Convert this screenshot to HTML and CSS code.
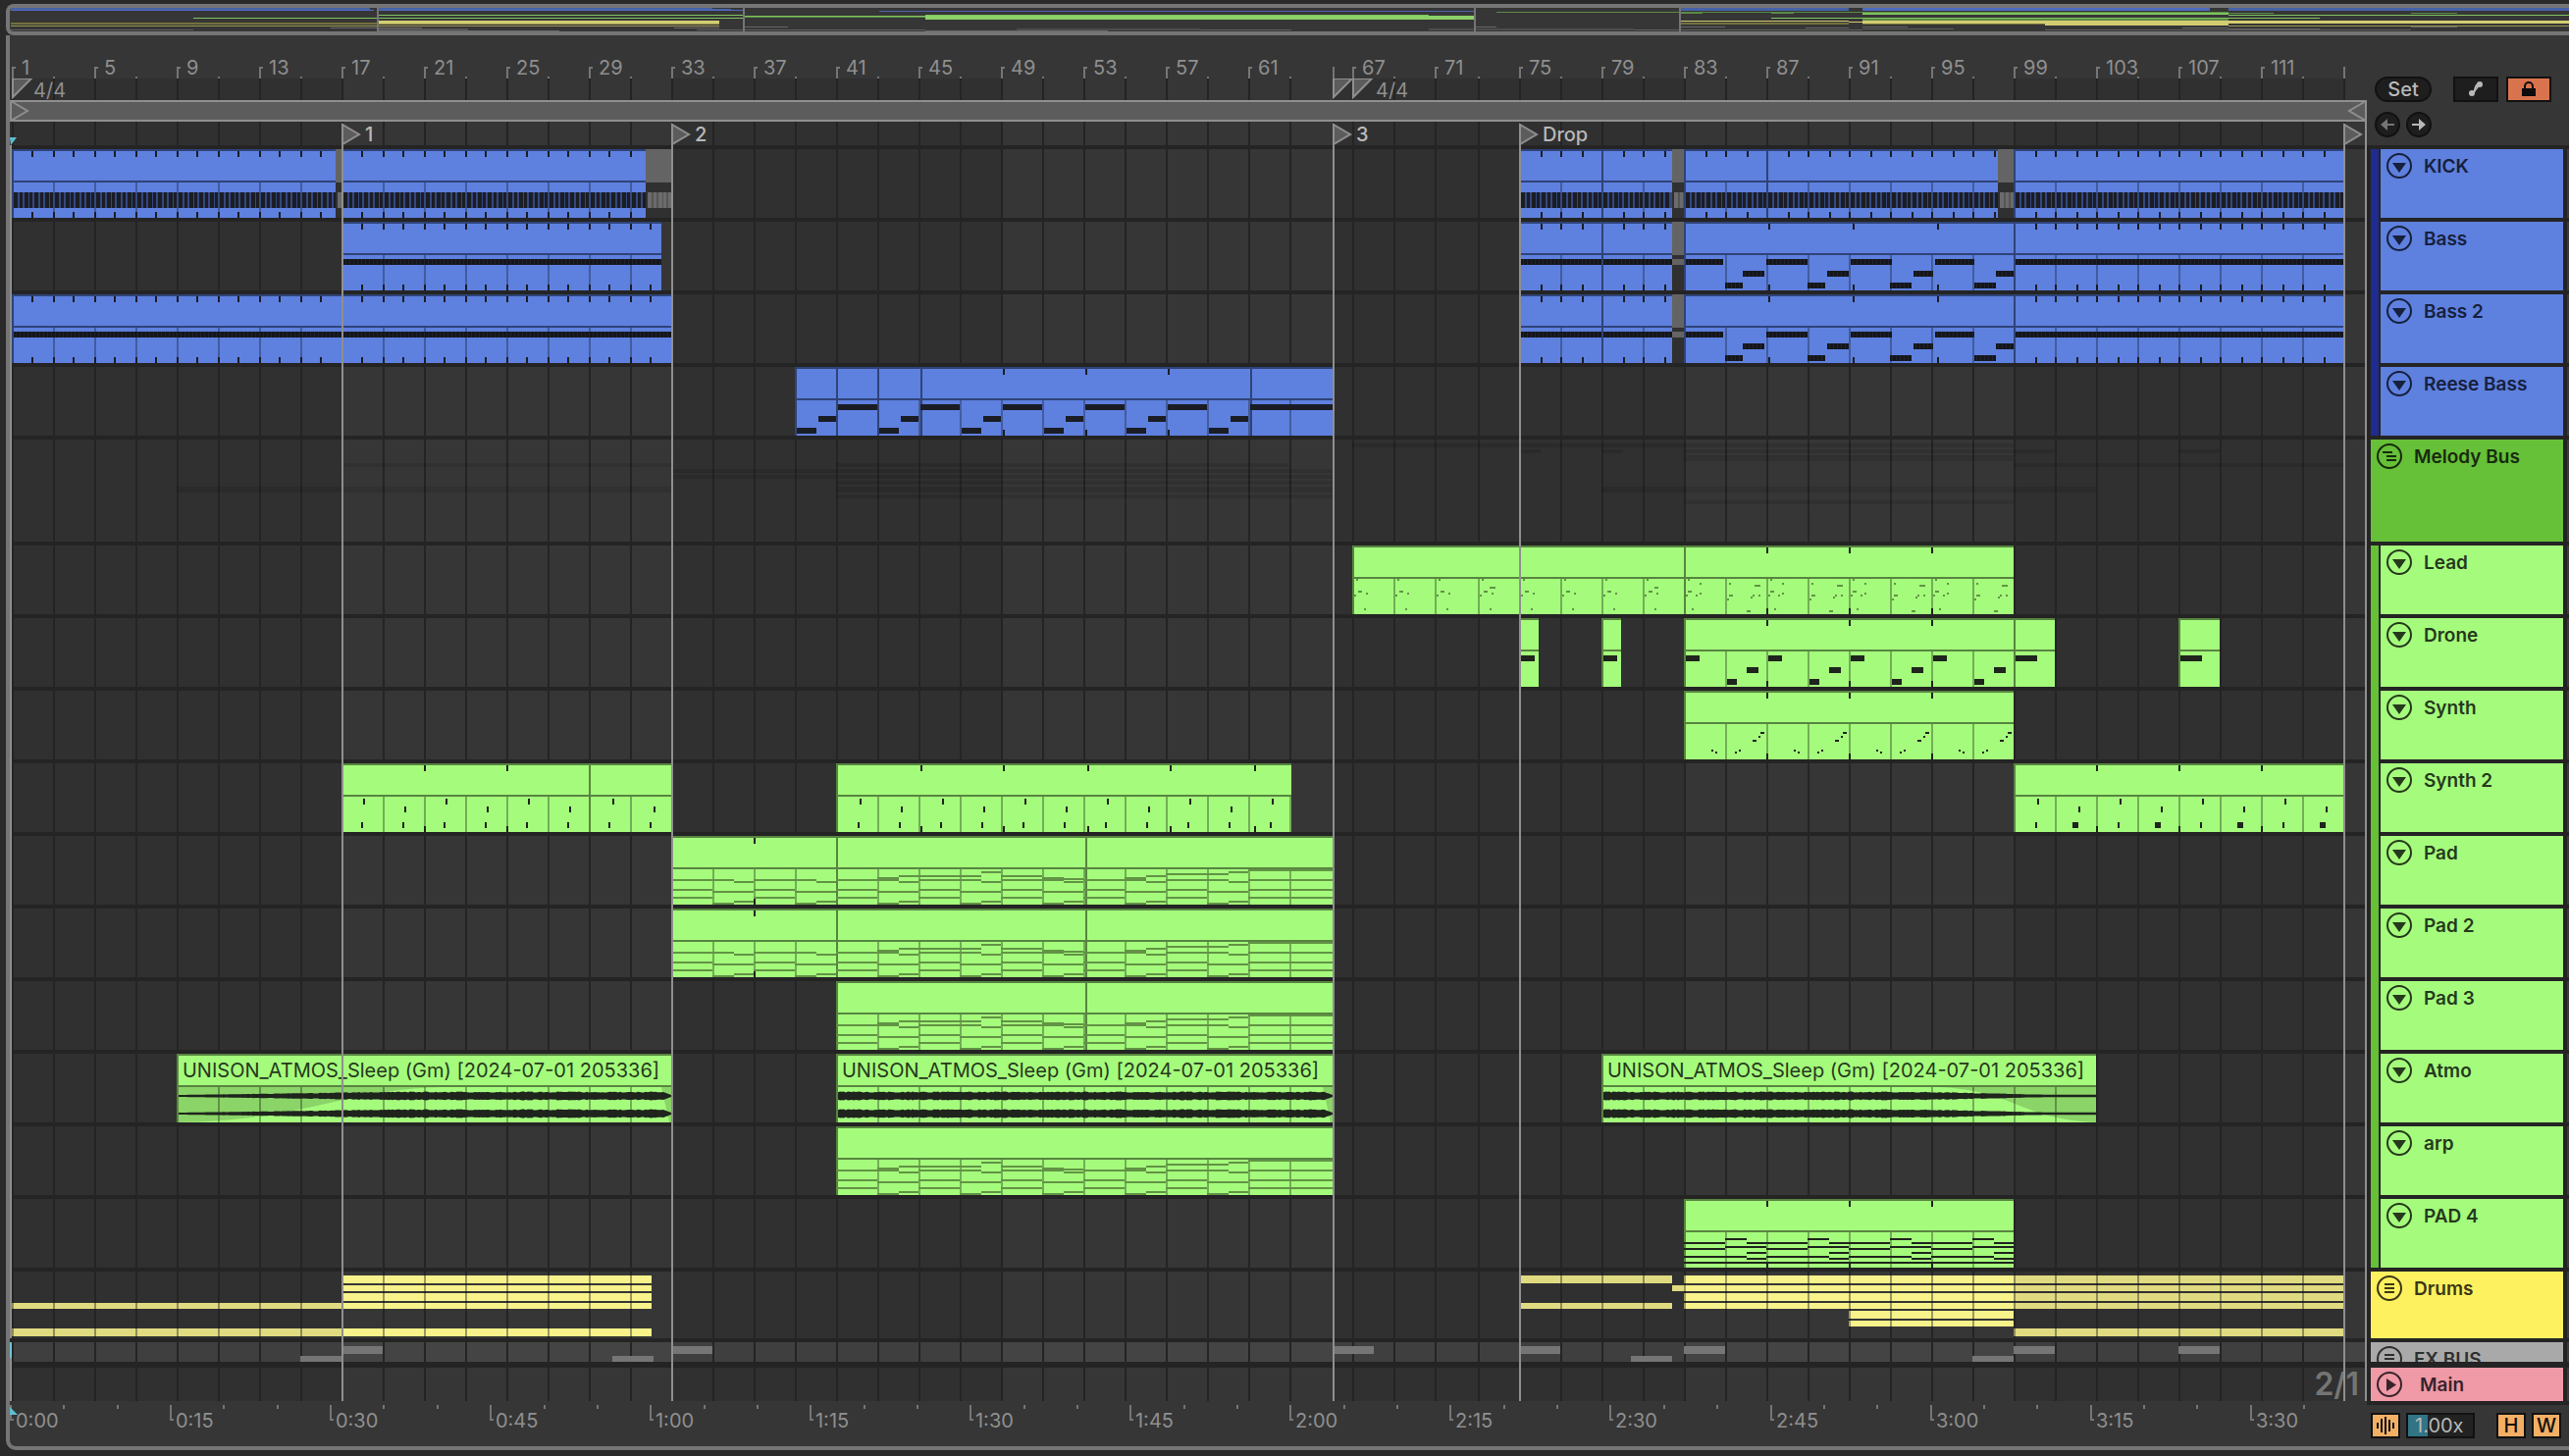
FILE: index.html
```
<!DOCTYPE html>
<html lang="en">
<head>
    <meta charset="UTF-8">
    <meta name="viewport" content="width=device-width, initial-scale=1.0">
    <title>Arrangement</title>
    <link rel="stylesheet" href="styles.css">
</head>
<body>
    <svg class="symbols" aria-hidden="true">
        <symbol id="fold" viewBox="0 0 26 26">
            <circle cx="13" cy="13" r="12" fill="none" stroke="currentColor" stroke-width="2"/>
            <path d="M6 10h14l-7 10z" fill="currentColor"/>
        </symbol>
        <symbol id="group" viewBox="0 0 26 26">
            <circle cx="13" cy="13" r="12" fill="none" stroke="currentColor" stroke-width="2"/>
            <path d="M8 9h10M8 13h10M8 17h10" stroke="currentColor" stroke-width="2"/>
        </symbol>
        <symbol id="bus" viewBox="0 0 26 26">
            <circle cx="13" cy="13" r="12" fill="none" stroke="currentColor" stroke-width="2"/>
            <path d="M6 9h10M10 13h10M10 17h10" stroke="currentColor" stroke-width="2"/>
        </symbol>
        <symbol id="play" viewBox="0 0 26 26">
            <circle cx="13" cy="13" r="12" fill="none" stroke="currentColor" stroke-width="2"/>
            <path d="M10 7v13l10-6.500z" fill="currentColor"/>
        </symbol>
    </svg>

    <div class="overview" id="overview"></div>

    <main class="arrangement">
        <section class="timeline">
            <div class="ruler" id="ruler"></div>
            <div class="signatures" id="signatures"></div>
            <div class="loop" id="loop"></div>
            <div class="tracks">
                <div class="locators" id="locators"></div>
                <div class="lanes" id="lanes"></div>
                <div class="lane main-lane" id="mainLane"><span class="zoom-value">2/1</span></div>
                <div class="lines" id="lines"></div>
            </div>
            <div class="time-ruler" id="timeRuler"></div>
        </section>

        <aside class="sidebar">
            <div class="controls">
                <div class="control-row">
                    <button class="pill">Set</button>
                    <button class="square automation" aria-label="Automation mode">
                        <svg width="42" height="22" viewBox="0 0 42 22"><path d="M17 16c5-1 1-10 8-11" fill="none" stroke="#b8b8b8" stroke-width="2"/><path d="M17 16 25 6" stroke="#b8b8b8" stroke-width="2"/><circle cx="17" cy="15" r="3" fill="#b8b8b8"/><circle cx="25" cy="6" r="3" fill="#b8b8b8"/></svg>
                    </button>
                    <button class="square lock" aria-label="Lock envelopes">
                        <svg width="42" height="22" viewBox="0 0 42 22"><path d="M17 11V8a4 4 0 0 1 8 0v3" fill="none" stroke="#0c0c0c" stroke-width="2"/><path d="M14 10h14v8H14z" fill="#0c0c0c"/></svg>
                    </button>
                </div>
                <div class="control-row">
                    <button class="round off" aria-label="Previous locator">
                        <svg width="22" height="22" viewBox="0 0 22 22"><path d="M4 11l7-6v5h7v2h-7v5z" fill="currentColor"/></svg>
                    </button>
                    <button class="round" aria-label="Next locator">
                        <svg width="22" height="22" viewBox="0 0 22 22"><path d="M18 11l-7-6v5H4v2h7v5z" fill="currentColor"/></svg>
                    </button>
                </div>
            </div>
            <ul class="headers">
                <li class="child navy"><button class="header blue"><svg><use href="#fold"/></svg>KICK</button></li>
                <li class="child navy"><button class="header blue"><svg><use href="#fold"/></svg>Bass</button></li>
                <li class="child navy"><button class="header blue"><svg><use href="#fold"/></svg>Bass 2</button></li>
                <li class="child navy last"><button class="header blue"><svg><use href="#fold"/></svg>Reese Bass</button></li>
                <li class="bus"><button class="header leaf"><svg><use href="#bus"/></svg>Melody Bus</button></li>
                <li class="child"><button class="header green"><svg><use href="#fold"/></svg>Lead</button></li>
                <li class="child"><button class="header green"><svg><use href="#fold"/></svg>Drone</button></li>
                <li class="child"><button class="header green"><svg><use href="#fold"/></svg>Synth</button></li>
                <li class="child"><button class="header green"><svg><use href="#fold"/></svg>Synth 2</button></li>
                <li class="child"><button class="header green"><svg><use href="#fold"/></svg>Pad</button></li>
                <li class="child"><button class="header green"><svg><use href="#fold"/></svg>Pad 2</button></li>
                <li class="child"><button class="header green"><svg><use href="#fold"/></svg>Pad 3</button></li>
                <li class="child"><button class="header green"><svg><use href="#fold"/></svg>Atmo</button></li>
                <li class="child"><button class="header green"><svg><use href="#fold"/></svg>arp</button></li>
                <li class="child last"><button class="header green"><svg><use href="#fold"/></svg>PAD 4</button></li>
                <li class="drums"><button class="header yellow"><svg><use href="#group"/></svg>Drums</button></li>
                <li class="fx"><button class="header gray"><svg><use href="#group"/></svg>FX BUS</button></li>
                <li class="main"><button class="header pink"><svg><use href="#play"/></svg>Main</button></li>
            </ul>
            <div class="status">
                <button class="square small" aria-label="Waveform zoom">
                    <svg width="26" height="22" viewBox="0 0 26 22"><path d="M5 8v6M9 4v14M13 2v18M17 5v12M21 8v6" stroke="#111" stroke-width="2"/></svg>
                </button>
                <input class="speed" type="text" value="1.00x" aria-label="Zoom factor">
                <button class="square small height">H</button>
                <button class="square small">W</button>
            </div>
        </aside>
    </main>

    <script src="script.js"></script>
</body>
</html>
```
FILE: styles.css
```
* {
    box-sizing: border-box;
}

body {
    margin: 0;
    padding: 4px 0 6px 6px;
    background-color: #2a2a2a;
    color: #8f8f8f;
    font-family: Inter, "Liberation Sans", sans-serif;
    font-size: 20px;
    line-height: 24px;
    overflow-x: hidden;
}

button, input {
    font: inherit;
    color: inherit;
    margin: 0;
}

button {
    cursor: pointer;
}

svg {
    display: block;
}

.symbols {
    display: none;
}

.chart {
    width: 100%;
    height: 100%;
    shape-rendering: crispEdges;
}

.overview {
    height: 32px;
    border: 4px solid #757575;
    border-right: none;
    border-radius: 8px 0 0 8px;
    background-color: #363636;
    overflow: hidden;
}

.arrangement {
    display: grid;
    grid-template-columns: 1fr 206px;
    border-left: 4px solid #757575;
    border-bottom: 4px solid #757575;
    border-radius: 0 0 0 10px;
    background-color: #363636;
}

.timeline {
    min-width: 0;
}

/* rows above the lanes */

.ruler, .signatures, .loop, .locators, .time-ruler, .lane {
    position: relative;
}

.ruler {
    height: 44px;
}

.signatures {
    height: 22px;
}

.loop {
    height: 22px;
}

.locators {
    height: 24px;
    color: #b8b8b8;
    font-weight: 500;
}

.time-ruler {
    height: 42px;
}

.label {
    position: absolute;
    white-space: nowrap;
}

.ruler .label {
    top: 21px;
    padding-left: 10px;
}

.signatures .label {
    top: 0;
    padding-left: 24px;
}

.locators .label {
    top: 1px;
    padding-left: 24px;
}

.time-ruler .label {
    top: 4px;
    padding-left: 6px;
}

/* lanes */

.tracks {
    position: relative;
    background-color: #242424;
}

.lanes {
    display: flex;
    flex-direction: column;
    gap: 4px;
    padding: 4px 0 6px;
}

.lane {
    height: 70px;
    overflow: hidden;
}

.lane.bus {
    height: 104px;
}

.lane.drums {
    height: 68px;
}

.lane.fx {
    height: 20px;
}

.main-lane {
    height: 34px;
    margin-bottom: 4px;
    overflow: visible;
}

.lane .label {
    top: 5px;
    padding-left: 6px;
    color: #26391c;
}

.zoom-value {
    position: absolute;
    right: 8px;
    bottom: 0;
    font-size: 32px;
    line-height: 34px;
    font-weight: 600;
    color: #757575;
}

.lines {
    position: absolute;
    inset: 0;
    pointer-events: none;
}

/* sidebar */

.controls {
    display: flex;
    flex-direction: column;
    gap: 10px;
    height: 112px;
    padding: 42px 0 0 8px;
}

.control-row {
    display: flex;
    gap: 6px;
}

.pill, .round, .square {
    display: flex;
    align-items: center;
    justify-content: center;
    height: 26px;
    padding: 0;
    border: 2px solid #111;
    background-color: #1e1e1e;
    color: #b8b8b8;
}

.pill {
    width: 58px;
    border-radius: 13px;
    font-weight: 500;
}

.round {
    width: 26px;
    border-radius: 13px;
}

.round.off {
    color: #757575;
}

.square {
    width: 46px;
}

.automation {
    margin-left: 16px;
}

.lock {
    margin-left: 2px;
    background-color: #d9734e;
}

.headers {
    display: flex;
    flex-direction: column;
    gap: 4px;
    margin: 0;
    padding: 4px 0 4px 4px;
    list-style: none;
    background-color: #242424;
}

.headers li {
    display: flex;
    height: 70px;
}

.headers li::after {
    content: "";
    width: 2px;
    margin-left: 4px;
    background-color: #3c3c3c;
}

/* the group colour runs through the gap to the next child */
.headers .child::before {
    content: "";
    width: 8px;
    height: 74px;
    margin-right: 2px;
    background-color: #66c038;
}

.headers .navy::before {
    background-color: #1f2c8f;
}

.headers .last::before {
    height: 70px;
}

.headers .bus {
    height: 104px;
}

.headers .drums {
    height: 68px;
}

.headers .fx {
    height: 20px;
}

.headers .main {
    height: 34px;
    margin-top: 2px;
}

.header {
    flex: 1;
    display: flex;
    align-items: flex-start;
    gap: 12px;
    min-width: 0;
    padding: 4px 6px;
    border: none;
    overflow: hidden;
    font-size: 19px;
    line-height: 28px;
    font-weight: 600;
    text-align: left;
    white-space: nowrap;
}

.header svg {
    flex: none;
    width: 26px;
    height: 26px;
}

.blue {
    background-color: #5e80df;
    color: #17203c;
}

.green {
    background-color: #a5fc7c;
    color: #26391c;
}

.leaf {
    background-color: #66c038;
    color: #172b0d;
}

.yellow {
    background-color: #fdf15f;
    color: #3a3716;
}

.gray {
    background-color: #a9a9a9;
    color: #2e2e2e;
}

.pink {
    gap: 18px;
    background-color: #f099a7;
    color: #37232a;
}

.status {
    display: flex;
    gap: 6px;
    padding: 8px 8px 0 4px;
}

.small {
    width: 30px;
    background-color: #f3b065;
    color: #111;
    font-weight: 500;
}

.speed {
    width: 70px;
    height: 26px;
    padding: 0 0 0 7px;
    border: 2px solid #111;
    border-radius: 0;
    background: linear-gradient(90deg, #317486 20px, #222 20px);
    color: #b8b8b8;
}

.height {
    margin-left: 16px;
}
```
FILE: script.js
```
const WIDTH = 2402;
const OVERVIEW_WIDTH = 2608;

// bar number -> x, the meter changes shift a few bars
const MAP = [[1, 1], [65, 1347], [67, 1368], [71, 1452], [73, 1495.5], [75, 1538], [115, 2378], [117, 2420]];

const BLUE = { fill: '#5e80df', edge: '#2f4377', grid: '#425c9f', note: '#1b1d25' };
const GREEN = { fill: '#a5fc7c', edge: '#578540', grid: '#72ae56', note: '#1f241d', soft: '#629345' };
const MUTED = { fill: '#646464', edge: '#646464', grid: '#363636', note: '#646464' };

function barX(bar) {
    let i = 0;
    while (i < MAP.length - 2 && bar > MAP[i + 1][0]) i++;
    const [b0, x0] = MAP[i];
    const [b1, x1] = MAP[i + 1];
    const x = x0 + (bar - b0) * (x1 - x0) / (b1 - b0);
    return Math.round(x / 2) * 2;
}

function rect(x, y, w, h, fill) {
    return `<rect x="${x}" y="${y}" width="${w}" height="${h}" fill="${fill}"/>`;
}

function span(from, to, y, h, fill) {
    return rect(barX(from), y, barX(to) - barX(from), h, fill);
}

function chart(width, height, content) {
    return `<svg class="chart" viewBox="0 0 ${width} ${height}" preserveAspectRatio="none">${content}</svg>`;
}

function label(x, text) {
    return `<span class="label" style="left: ${(x / WIDTH * 100).toFixed(3)}%">${text}</span>`;
}

function gridBars() {
    const bars = [];
    for (let b = 1; b <= 115; b += 2) bars.push(b);
    return bars;
}

function background(height, light = '#363636', dark = '#303030') {
    let out = rect(0, 0, WIDTH, height, dark);
    [[17, 33], [49, 65], [83, 99]].forEach(([a, b]) => out += span(a, b, 0, height, light));
    out += rect(barX(115), 0, WIDTH - barX(115), height, light);
    gridBars().forEach(b => out += rect(barX(b), 0, 2, height, '#242424'));
    return out;
}

// clip: [from, to, tick bars or tick step, muted]
function clip([from, to, ticks, muted], base) {
    const c = muted ? MUTED : base;
    const x0 = barX(from);
    const x1 = barX(to);
    let out = rect(x0, 0, x1 - x0, 70, c.edge);
    out += rect(x0 + 2, 2, x1 - x0 - 2, 30, c.fill);
    out += rect(muted ? x0 : x0 + 2, 34, x1 - x0 - (muted ? 0 : 2), 36, muted ? '#303030' : c.fill);
    if (muted) return out;
    gridBars().filter(b => b > from && b < to).forEach(b => out += rect(barX(b), 34, 2, 36, c.grid));
    for (let b = from + ticks; ticks && b < to - 0.1; b += ticks) {
        out += rect(barX(b), 2, 2, 6, c.note) + rect(barX(b), 64, 2, 6, c.note);
    }
    return out;
}

// note: [from, to, y, height]
function notes(list, color) {
    return list.map(([from, to, y, h]) => rect(barX(from), y, Math.max(2, barX(to) - barX(from)), h, color)).join('');
}

function kickNotes(from, to, color, gap) {
    const x0 = barX(from);
    const x1 = barX(to);
    let out = rect(x0 + 2, 44, x1 - x0 - 2, 16, gap);
    for (let x = x0 + 2, i = 0; x < x1 - 1; x += i % 4 === 0 ? 6 : 5, i++) {
        out += rect(x, 44, Math.min(i % 2 ? 3 : 4, x1 - x), 16, color);
    }
    return out;
}

function bassNotes(list) {
    return list.map(([from, to, y]) => {
        const x0 = barX(from) + 2;
        const x1 = barX(to);
        let out = rect(x0, y, x1 - x0, 6, '#15161a');
        for (let x = x0 + 2; x < x1; x += 4) out += rect(x, y, 1, 6, '#20232e');
        return out;
    }).join('');
}

function repeat(starts, pattern) {
    return starts.flatMap(s => pattern.map(([a, b, y, h]) => [s + a, s + b, y, h]));
}

// chord: [from, to, [y, ...]]
function chords(list, color) {
    return list.map(([a, b, ys]) => ys.map(y => span(a, b, y === 42 ? 42 : y, y === 42 ? 4 : 2, color)).join('')).join('');
}

const PAD_INTRO = [33, 37].flatMap(s => [
    [s, s + 2, [44, 54, 62]], [s + 2, s + 3, [44, 56, 68]], [s + 3, s + 4, [46, 56, 66]]
]);
const PAD_MAIN = [
    [41, 43, [44, 54, 62]], [43, 44, [42, 56, 68]], [44, 45, [40, 46, 56, 66]],
    [45, 47, [40, 44, 54, 62]], [47, 48, [40, 44, 56, 68]], [48, 49, [36, 46, 56, 66]],
    [49, 51, [40, 44, 54, 62]], [51, 52, [42, 56, 68]], [52, 53, [43, 46, 56, 66]],
    [53, 55, [44, 54, 62]], [55, 56, [42, 56, 68]], [56, 57, [40, 46, 56, 66]],
    [57, 59, [38, 44, 54, 62]], [59, 60, [38, 44, 56, 68]], [60, 61, [36, 46, 56, 66]],
    [61, 65, [34, 44, 54, 62]]
];
const PAD4 = [83, 87, 91, 95].flatMap(s => [
    [s, s + 2, [44, 50, 58, 64]], [s + 2, s + 3, [40, 48, 58, 64]], [s + 3, s + 4, [44, 48, 54, 60, 64]]
]);

const LEAD_A = [[0.2, 0.3, 34, 2], [0.3, 0.5, 46, 2], [0.65, 0.75, 48, 2], [0.1, 0.2, 50, 2], [0.55, 0.65, 64, 2]];
const LEAD_B = [
    [0.2, 0.3, 34, 2], [0.8, 0.9, 38, 2], [0.2, 0.4, 46, 2], [0.75, 0.85, 48, 2], [0.6, 0.7, 50, 2], [0.1, 0.2, 50, 2], [0.4, 0.5, 64, 2],
    [2.2, 2.3, 38, 2], [3.4, 3.7, 40, 2], [2.2, 2.4, 50, 2], [3.3, 3.4, 50, 2], [3.6, 3.7, 50, 2], [3.2, 3.3, 52, 2], [2.1, 2.2, 54, 2], [3, 3.2, 66, 2]
];
const SYNTH = [[1.35, 1.4, 60, 2], [1.5, 1.6, 62, 2], [2.5, 2.6, 62, 2], [2.7, 2.8, 60, 2],
    [3.35, 3.5, 50, 2], [3.6, 3.7, 46, 2], [3.75, 3.9, 42, 2]];
const DRONE = [[0.1, 0.8, 38, 6], [2.1, 2.6, 62, 6], [3, 3.6, 50, 6]];
const SYNTH2 = [[1.1, 1.1, 36, 6], [3.1, 3.1, 44, 6], [1, 1, 60, 6], [3, 3, 60, 6]];

// waveform of one channel, level(t) gives the height over the clip
function waveform(from, to, middle, level) {
    const x0 = barX(from) + 2;
    const x1 = barX(to);
    let top = '';
    let bottom = '';
    let seed = 7;
    for (let x = x0; x <= x1; x += 2) {
        seed = (seed * 1103 + 12345) % 65536;
        const size = level((x - x0) / (x1 - x0)) * (0.8 + seed / 65536 * 0.35);
        top += `L${x} ${(middle - 1 - size).toFixed(1)}`;
        bottom = `L${x} ${(middle + 1 + size).toFixed(1)}` + bottom;
    }
    return `<path d="M${x0} ${middle}${top}${bottom}z" fill="#1f241d" shape-rendering="auto"/>`;
}

function audio(from, to, fade, level) {
    return clip([from, to, 0], GREEN) + fade + waveform(from, to, 43, level) + waveform(from, to, 61, level);
}

function atmo() {
    const shade = d => `<path d="${d}" fill="#00000028" shape-rendering="auto"/>`;
    const a = barX(9) + 2;
    const b = barX(33);
    const c = barX(103);
    const end = t => Math.min(3, (1 - t) * 180);
    const tip = x => shade(`M${x - 10} 34H${x}V70h-2z`);
    return audio(9, 33, shade(`M${a} 34H${a + 268}C${a + 170} 36 ${a + 130} 68 ${a} 70z`) + tip(b), t => Math.min(t * 7, end(t)))
        + audio(41, 65, tip(barX(65)), end)
        + audio(79, 103, shade(`M${c} 34H${c - 160}C${c - 80} 38 ${c - 80} 66 ${c} 70z`), t => t < 0.65 ? 3 : Math.max(0.2, 3 - (t - 0.65) * 11));
}

const range = (from, to, step) => {
    const out = [];
    for (let i = from; i < to; i += step) out.push(i);
    return out;
};

function kick() {
    const clips = [[1, 16.75, 1], [16.75, 17, 0, true], [17, 31.75, 1], [31.75, 33, 0, true], [75, 79, 1], [79, 82.4, 1],
        [82.4, 83, 0, true], [83, 87, 1], [87, 98.2, 1], [98.2, 99, 0, true], [99, 115, 1]];
    return clips.map(c => clip(c, BLUE) + (c[3] ? kickNotes(c[0], c[1], '#6b6b6b', '#555') : kickNotes(c[0], c[1], '#1b1d25', '#34487f'))).join('');
}

function bass(clips, melody) {
    const full = clips.filter(c => c[2] === 1).map(c => [c[0], c[1], 38]);
    const gap = span(82.4, 83, 38, 6, '#646464');
    return clips.map(c => clip(c, BLUE)).join('') + bassNotes(full) + bassNotes(melody) + gap;
}

const DROP_BASS = [[75, 79, 1], [79, 82.4, 1], [82.4, 83, 0, true], [83, 99, 4.1], [99, 115, 1]];
const MELODY = [
    [83, 84.95, 38], [84.9, 85.9, 62], [85.8, 86.9, 50],
    [86.9, 89, 38], [88.9, 89.9, 62], [89.9, 91, 50],
    [91, 93.1, 38], [92.9, 94, 62], [94, 95.1, 50],
    [95.1, 97.1, 38], [97, 98.1, 62], [98, 99, 50]
];

function reese() {
    const clips = [[39, 41, 0], [41, 43, 0], [43, 45.1, 0], [45.1, 61.1, 4], [61.1, 65, 0]];
    const list = range(39, 60, 4).flatMap(s => [[s + 0.1, s + 1, 62, 6], [s + 1.1, s + 2, 50, 6], [s + 2.1, s + 4, 38, 6]]);
    list.push([63, 65, 38, 6]);
    return clips.map(c => clip(c, BLUE)).join('') + notes(list, BLUE.note);
}

function green(clips, content) {
    return clips.map(c => clip(c, GREEN)).join('') + content;
}

function bands(list, color) {
    return list.map(([from, to, y, h]) => span(from, to, y, h, color)).join('');
}

const BUS_BANDS = [[17, 33, 24, 4], [9, 33, 48, 6], [33, 65, 30, 4], [33, 65, 36, 4], [41, 63, 24, 4], [41, 65, 42, 4],
    [41, 65, 48, 6], [41, 65, 56, 4], [67, 99, 4, 4], [75, 76, 10, 4], [79, 80, 10, 4], [83, 101, 10, 4], [83, 99, 16, 6],
    [107, 109, 10, 4], [99, 115, 24, 4], [79, 103, 48, 6], [83, 99, 62, 4]];

function drums() {
    const row = (from, to, list, color) => list.map(y => span(from, to, y, [14, 32, 50].includes(y) ? 6 : 8, color)).join('');
    const dim = '#e0db80';
    const bright = '#f7f28a';
    const out = row(1, 17, [32, 58], dim) + row(17, 32.05, [4, 14, 22, 32, 58], bright) + row(75, 82.4, [4, 32], dim)
        + row(82.4, 83, [14], dim) + row(83, 99, [4, 14, 22, 32], bright) + row(91, 99, [40, 50], bright)
        + row(99, 115, [4, 14, 22, 32, 58], dim);
    return out + gridBars().map(b => rect(barX(b), 0, 2, 68, '#24242470')).join('');
}

const FX = [[15, 17, 14, 6], [17, 19, 4, 8], [30.1, 32.1, 14, 6], [33, 35, 4, 8], [65, 68, 4, 8], [75, 77, 4, 8],
    [80.4, 82.4, 14, 6], [83, 85, 4, 8], [97, 99, 14, 6], [99, 101, 4, 8], [107, 109, 4, 8]];

const ATMO_NAME = 'UNISON_ATMOS_Sleep (Gm) [2024-07-01 205336]';

const LANES = [
    { content: kick() },
    { content: bass([[17, 32.5, 1], ...DROP_BASS], MELODY) },
    { content: bass([[1, 17, 1], [17, 33, 1], ...DROP_BASS], MELODY) },
    { content: reese() },
    { type: 'bus', height: 104, content: bands(BUS_BANDS, '#0000001c') },
    { content: green([[67, 75, 0], [75, 83, 0], [83, 99, 4]], notes(repeat([67, 69, 71, 73, 75, 77, 79, 81], LEAD_A).concat([[73.6, 73.9, 42, 2], [81.6, 81.8, 42, 2]], repeat([83, 87, 91, 95], LEAD_B)), GREEN.soft)) },
    { content: green([[75, 75.95, 0], [79, 79.95, 0], [83, 99, 4], [99, 101, 0], [107, 109, 0]], notes(repeat([83, 87, 91, 95], DRONE).concat([[75.1, 75.8, 38, 6], [79.1, 79.8, 38, 6], [99.1, 100.1, 38, 6], [107.1, 108.1, 38, 6]]), GREEN.note)) },
    { content: green([[83, 99, 4]], notes(repeat([83, 87, 91, 95], SYNTH), GREEN.note)) },
    { content: green([[17, 29, 4], [29, 33, 0], [41, 63.05, 4.05], [99, 115, 4]], notes(repeat([17, 21, 25, 29, 41, 45, 49, 53, 57, 99, 103, 107, 111], SYNTH2).concat(repeat([61], [SYNTH2[0], SYNTH2[2]]), repeat([99, 103, 107, 111], [[2.9, 3.05, 60, 6]])), GREEN.note)) },
    { content: green([[33, 41, 4], [41, 53.1, 0], [53.1, 65, 0]], chords(PAD_INTRO.concat(PAD_MAIN), GREEN.soft)) },
    { content: green([[33, 41, 4], [41, 53.1, 0], [53.1, 65, 0]], chords(PAD_INTRO.concat(PAD_MAIN), GREEN.soft)) },
    { content: green([[41, 53.1, 0], [53.1, 65, 0]], chords(PAD_MAIN, GREEN.soft)) },
    { content: atmo(), labels: [9, 41, 79] },
    { content: green([[41, 65, 0]], chords(PAD_MAIN, GREEN.soft)) },
    { content: green([[83, 99, 4]], chords(PAD4, GREEN.note)) },
    { type: 'drums', height: 68, content: drums() },
    { type: 'fx', height: 20, light: '#444', dark: '#3f3f3f', content: bands(FX, '#757575') + rect(0, 0, 2, 20, '#6cc5d6') }
];

document.getElementById('lanes').innerHTML = LANES.map(lane => {
    const height = lane.height || 70;
    const labels = (lane.labels || []).map(b => label(barX(b), ATMO_NAME)).join('');
    return `<div class="lane ${lane.type || ''}">${chart(WIDTH, height, background(height, lane.light, lane.dark) + lane.content)}${labels}</div>`;
}).join('');

document.getElementById('mainLane').insertAdjacentHTML('afterbegin', chart(WIDTH, 34, background(34)));

// bar ruler
const numbers = [...range(1, 65, 4), ...range(67, 115, 4)];
let ticks = gridBars().map(b => rect(barX(b), 42, 2, 2, '#757575')).join('');
[...numbers, 65, 115].forEach(b => ticks += rect(barX(b), 32, 2, 12, '#757575'));
numbers.forEach(b => ticks += rect(barX(b) + 2, 32, 2, 2, '#757575'));
document.getElementById('ruler').innerHTML = chart(WIDTH, 44, ticks) + numbers.map(b => label(barX(b), b)).join('');

const flag = points => `<polygon points="${points}" fill="#5c5c5c" stroke="#8f8f8f" stroke-width="2" shape-rendering="auto"/>`;

const sign = b => flag(`${barX(b) + 1},0 ${barX(b) + 20},0 ${barX(b) + 1},19`);
document.getElementById('signatures').innerHTML = chart(WIDTH, 22, background(22) + sign(1) + sign(65) + sign(67)) + label(0, '4/4') + label(barX(67), '4/4');

document.getElementById('loop').innerHTML = chart(WIDTH, 22, rect(0, 0, WIDTH, 22, '#8f8f8f') + rect(0, 2, WIDTH, 18, '#5c5c5c')
    + flag('1,1 18,11 1,21') + flag(`${WIDTH - 1},1 ${WIDTH - 18},11 ${WIDTH - 1},21`));

// locators and their lines
const LOCATORS = [[17, '1'], [33, '2'], [65, '3'], [75, 'Drop'], [115, '']];
document.getElementById('locators').innerHTML = chart(WIDTH, 24, background(24)
    + '<polygon points="0,16 7,16 1,24" fill="#5bbfd0" shape-rendering="auto"/>'
    + LOCATORS.map(([b]) => flag(`${barX(b) + 1},3 ${barX(b) + 18},13 ${barX(b) + 1},23`)).join(''))
    + LOCATORS.map(([b, name]) => label(barX(b), name)).join('');

document.getElementById('lines').innerHTML = chart(WIDTH, 1308,
    LOCATORS.map(([b]) => rect(barX(b), 2, 2, 1306, '#8f8f8f')).join('')
    + rect(0, 24, 2, 1220, '#8f8f8f') + rect(0, 1264, 2, 44, '#8f8f8f') + rect(WIDTH - 2, 0, 2, 1308, '#8f8f8f'));

// time ruler, one label every 15 seconds
let seconds = '';
let times = '';
for (let s = 0; s <= 215; s += 5) {
    const x = Math.round(s * 10.87);
    const major = s % 15 === 0;
    seconds += rect(x, 0, 2, major ? 16 : 4, '#757575');
    if (major) {
        seconds += rect(x + 2, 14, 2, 2, '#757575');
        times += label(x, Math.floor(s / 60) + ':' + String(s % 60).padStart(2, '0'));
    }
}
seconds += '<polygon points="0,2 8,10 0,10" fill="#5bbfd0" shape-rendering="auto"/>';
document.getElementById('timeRuler').innerHTML = chart(WIDTH, 42, seconds) + times;

// overview of the whole song
const overviewX = bar => Math.round(bar <= 65 ? 1 + (bar - 1) * 23.3 : 1515 + (bar - 67) * 23.3);
const OVERVIEW = [
    [1, 16.7, 0, 3, '#4762a8'], [1, 16.9, 2, 1, '#4d6bbd'], [17, 31.7, 0, 3, '#4762a8'], [17, 32.5, 1, 2, '#4762a8'], [17, 33, 2, 1, '#4d6bbd'],
    [39, 65, 3, 1, '#4d62b0'], [75, 82.4, 0, 3, '#4762a8'], [83, 98.2, 0, 3, '#4d6bbd'], [99, 115, 0, 3, '#4762a8'],
    [17, 33, 7, 1, '#7fc45f'], [9, 33, 10, 1, '#7fc45f'], [33, 41, 8, 1, '#7fc45f'], [33, 41, 9, 1, '#5b8a45'],
    [41, 65, 8, 4, '#8bd267'], [41, 63, 7, 1, '#7fc45f'], [67, 99, 4, 1, '#5b8a45'], [75, 76, 5, 1, '#5b8a45'], [79, 80, 5, 1, '#5b8a45'],
    [83, 99, 5, 2, '#7fc45f'], [99, 101, 5, 1, '#5b8a45'], [99, 115, 7, 1, '#7fc45f'], [107, 109, 5, 1, '#5b8a45'], [79, 103, 10, 1, '#7fc45f'], [83, 99, 11, 2, '#5b8a45'],
    [1, 17, 15, 2, '#74713f'], [1, 32, 18, 1, '#9b9753'], [17, 32, 13, 3, '#d3cd72'], [17, 32, 16, 1, '#9b9753'],
    [75, 82.4, 13, 1, '#d3cd72'], [75, 82.4, 15, 2, '#74713f'], [82.4, 83, 14, 1, '#d3cd72'], [83, 99, 13, 3, '#d3cd72'], [83, 99, 16, 1, '#74713f'],
    [91, 99, 14, 4, '#d3cd72'], [99, 115, 13, 3, '#d3cd72'], [99, 115, 18, 1, '#9b9753'],
    [15, 19, 20, 1, '#666'], [17, 21, 21, 2, '#555'], [1, 9, 22, 1, '#5e5e5e'], [17, 25, 23, 1, '#666'], [30, 32, 20, 1, '#666'], [31, 41, 22, 1, '#5e5e5e'],
    [33, 35, 19, 1, '#666'], [41, 49, 23, 1, '#666'], [45, 53, 21, 2, '#4c4c4c'], [53, 57, 22, 1, '#5e5e5e'], [63, 73, 21, 2, '#4c4c4c'],
    [65, 67, 19, 1, '#666'], [75, 77, 19, 1, '#666'], [73, 83, 22, 1, '#5e5e5e'], [80.5, 82.4, 20, 1, '#666'], [83, 85, 19, 1, '#666'], [83, 87, 21, 1, '#5e5e5e'],
    [91, 99, 22, 1, '#5e5e5e'], [97, 99, 20, 1, '#666'], [99, 103, 21, 1, '#5e5e5e'], [99, 107, 22, 1, '#5e5e5e'], [107, 109, 19, 1, '#666']
];
document.getElementById('overview').innerHTML = chart(OVERVIEW_WIDTH, 24,
    OVERVIEW.map(([a, b, y, h, color]) => rect(overviewX(a), y, overviewX(b) - overviewX(a), h, color)).join('')
    + [17, 33, 65, 75].map(b => rect(overviewX(b), 0, 2, 24, '#757575')).join(''));
```
